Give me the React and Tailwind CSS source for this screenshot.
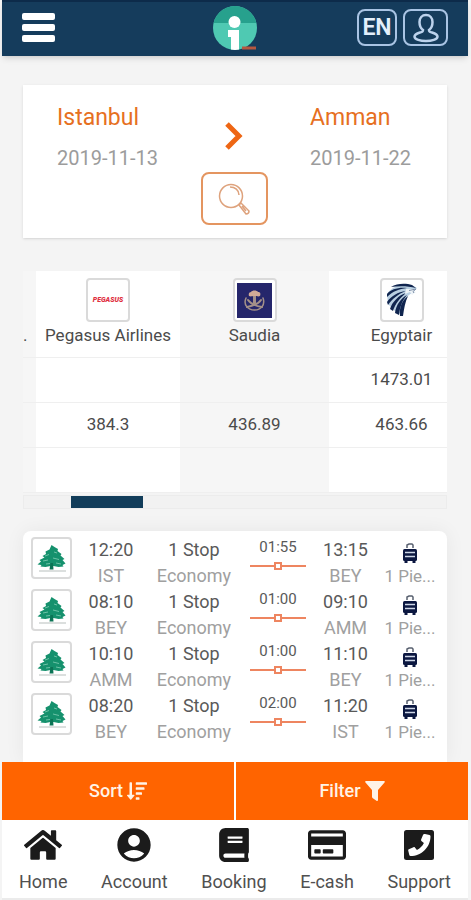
import { FaHome, FaBook, FaRegCreditCard, FaSortAmountDown } from 'react-icons/fa';
import { MdAccountCircle } from 'react-icons/md';

const fares = [
  { airline: 'Pegasus Airlines', logo: PegasusLogo, prices: ['', '384.3', ''] },
  { airline: 'Saudia', logo: SaudiaLogo, prices: ['', '436.89', ''] },
  { airline: 'Egyptair', logo: EgyptairLogo, prices: ['1473.01', '463.66', ''] },
];

const flights = [
  { depart: '12:20', from: 'IST', duration: '01:55', arrive: '13:15', to: 'BEY' },
  { depart: '08:10', from: 'BEY', duration: '01:00', arrive: '09:10', to: 'AMM' },
  { depart: '10:10', from: 'AMM', duration: '01:00', arrive: '11:10', to: 'BEY' },
  { depart: '08:20', from: 'BEY', duration: '02:00', arrive: '11:20', to: 'IST' },
];

const tabs = [
  { label: 'Home', icon: FaHome, size: 'h-[38px] w-[38px]' },
  { label: 'Account', icon: MdAccountCircle, size: 'h-10 w-10' },
  { label: 'Booking', icon: FaBook, size: 'h-[34px] w-[34px]' },
  { label: 'E-cash', icon: FaRegCreditCard, size: 'h-[38px] w-[38px]' },
  { label: 'Support', icon: SupportIcon, size: 'h-[30px] w-[30px]' },
];

function PegasusLogo() {
  return (
    <span className="flex h-full w-full items-center justify-center text-[7px] leading-none font-black italic text-[#e0303f]">
      PEGASUS
    </span>
  );
}

function SaudiaLogo() {
  return (
    <svg viewBox="0 0 35 35" className="h-[35px] w-[35px]" aria-hidden="true">
      <rect width="35" height="35" fill="#25266b" />
      <g fill="none" stroke="#a39089" strokeLinecap="round">
        <path d="M9 15c-3 7 2 12 8.500 12s11-5 8.500-12" strokeWidth="1.500" />
        <path d="M10 24c6-1 12-4 14-7M25 24c-6-1-12-4-14-7" strokeWidth="2" />
        <path d="M17.500 12v8" strokeWidth="3" />
      </g>
      <path d="M12 13c-1-3 1-4 2-4 1-2 6-2 7 0 2 0 3 1 2 4-2 1-3 0-5.500 0S14 14 12 13z" fill="#d2ab97" />
    </svg>
  );
}

function EgyptairLogo() {
  return (
    <svg viewBox="0 0 36 36" className="h-9 w-9" aria-hidden="true">
      <path d="M3 12C8 4 18 1 27 3l6 3-5 5c-7 3-9 12-9 22l-8-4-7-7z" fill="#b9d0e2" />
      <g fill="#10254f">
        <path d="M7 5c6-4 15-4 21-2l4 3c-8-2-17-2-25-1z" />
        <path d="M3 12c4-5 12-7 20-6-8 1-14 3-20 9z" />
        <path d="M3 20c4-6 11-10 19-11-8 3-14 8-18 14z" />
        <path d="M6 27c2-7 9-14 16-16-6 5-11 11-13 18z" />
        <path d="M11 31c1-8 6-15 12-18-5 6-7 12-8 20z" />
        <path d="M16 34c-1-8 2-16 8-20-3 6-4 13-5 20z" />
      </g>
      <path d="M22 7l11 0-3 2 2 1-4 3-2-3-5 2z" fill="#edf3f7" />
      <path d="M25 8.500l7-1.500-3 2.500 1 1.500" fill="none" stroke="#7b8ca6" />
    </svg>
  );
}

function CedarLogo() {
  return (
    <svg viewBox="0 0 36 36" className="h-9 w-9" aria-hidden="true">
      <path
        d="M17.500 5l3 2 3.500 2-.500 2 4 3-1 1.500 4 3.500-2 1 3 3.500-3 1.500 1 1.500-5 .500-5-1h-3l-5 1-5-.500 1-1.500-4-.500 3.500-3-1.500-1.500 5-2.500-2-1.500 3.500-2-.500-2.500 4-2z"
        fill="#15916d"
      />
      <path d="M11 16l4-1.500M20 12l3 1M9 21l5-1M19 18l6 1.500M12 24l4-.500M22 23l5 1" stroke="#6cc2a6" />
      <path d="M16.500 23h2.500l.500 6.500h-4z" fill="#0b7455" />
      <path d="M5 31h27" stroke="#b8bfbd" />
    </svg>
  );
}

function BrandLogo() {
  return (
    <svg viewBox="0 0 46 44" className="h-11 w-[46px]" role="img" aria-label="Home page">
      <clipPath id="disc">
        <circle cx="23" cy="22" r="22" />
      </clipPath>
      <g clipPath="url(#disc)">
        <rect width="46" height="44" fill="#4fc9b2" />
        <rect width="46" height="17" fill="#27a18d" />
        <path d="M16 24h11v20h-8V31h-3z" fill="#fff" />
      </g>
      <circle cx="22.500" cy="16" r="6" fill="#fff" />
      <path d="M30 42h14" stroke="#b5573f" strokeWidth="3" />
    </svg>
  );
}

function FilterIcon() {
  return (
    <svg viewBox="0 0 20 20" className="h-5 w-5" fill="currentColor" aria-hidden="true">
      <path d="M1 0h18c1 0 1 1 .500 1.500L13 9v10c0 .800-.800 1.200-1.500.700L7.500 17 7 16V9L.500 1.500C0 1 0 0 1 0z" />
    </svg>
  );
}

function SupportIcon({ className }) {
  return (
    <svg viewBox="0 0 30 30" className={className} aria-hidden="true">
      <rect width="30" height="30" rx="2.500" fill="currentColor" />
      <path
        d="M21 4l4.500 1c.700.200 1 .600 1 1.200C26.500 17 17.500 26 6.500 26c-.600 0-1-.300-1.200-1L4.200 20.500c-.200-.600.100-1 .600-1.300l4.700-2c.500-.200 1-.100 1.400.300l2 2.500c3-1.500 5.600-4 7-7l-2.500-2c-.400-.400-.500-.900-.300-1.400l2-4.900c.300-.600.800-.900 1.900-.700z"
        fill="#fff"
      />
    </svg>
  );
}

function Suitcase() {
  return (
    <svg viewBox="0 0 16 20" className="h-5 w-4" aria-hidden="true">
      <path d="M5 5V2l2-1h3l1 1v3" fill="none" stroke="#58606f" strokeWidth="1.500" />
      <rect x="1" y="6" width="14" height="12" rx="1.500" fill="#0b1740" />
      <path d="M3 9.500h10M3 13.500h10" stroke="#cfd8e8" strokeWidth="1.500" />
      <path d="M2.500 18h3v2h-3zM10.500 18h3v2h-3z" fill="#0b1740" />
    </svg>
  );
}

const Header = () => (
  <header className="flex h-14 items-center justify-between border-t-2 border-[#0d2b4a] bg-[#153c5c] px-5 pb-[3px] shadow-md">
    <div className="flex flex-1">
      <button className="space-y-1" aria-label="Menu">
        <span className="block h-[7px] w-[33px] rounded-xs bg-white" />
        <span className="block h-[7px] w-[33px] rounded-xs bg-white" />
        <span className="block h-[7px] w-[33px] rounded-xs bg-white" />
      </button>
    </div>
    <BrandLogo />
    <div className="flex flex-1 justify-end gap-1.5">
      <button className="h-[37px] w-10 rounded-lg border-2 border-[#a9c4e4] text-[23px] leading-8 font-semibold text-[#e3effb]">
        EN
      </button>
      <button
        className="flex h-[37px] w-[45px] items-center justify-center rounded-lg border-2 border-[#a9c4e4]"
        aria-label="Profile"
      >
        <svg viewBox="0 0 26 30" className="h-[30px] w-[26px]" fill="none" stroke="#bcd2ec" strokeWidth="2.500">
          <path d="M10 17c-3-2-3.500-5-3.500-8 0-4 2.500-7 6.500-7s6.500 3 6.500 7c0 3-.500 6-3.500 8 0 2 1 2 3 2.500 3 1 5.500 2 5.500 4 0 3-6 4.500-11.500 4.500S1.500 26.500 1.500 23.500c0-2 2.500-3 5.500-4 2-.500 3-.500 3-2.500z" />
        </svg>
      </button>
    </div>
  </header>
);

const SearchSummary = () => (
  <section className="flex h-[153px] justify-between bg-white pt-[17px] pr-9 pl-[34px] shadow-sm">
    <div>
      <p className="text-[23px] leading-8 text-[#e6701f]">Istanbul</p>
      <p className="mt-2 text-xl leading-8 text-[#9c9c9c]">2019-11-13</p>
    </div>
    <div className="flex flex-col items-center gap-5 pt-[18px]">
      <svg viewBox="0 0 20 32" className="h-8 w-5" fill="none" stroke="#ee6614" strokeWidth="5" aria-hidden="true">
        <path d="M3 4l12 12L3 28" />
      </svg>
      <button
        className="flex h-[53px] w-[67px] items-center justify-center rounded-lg border-2 border-[#e49560]"
        aria-label="Search"
      >
        <svg viewBox="0 0 32 32" className="h-8 w-8" fill="none" stroke="#dea27c" strokeWidth="1.500">
          <circle cx="13" cy="13" r="11.500" />
          <path d="M12 4c5 0 9 3 9 8M21 22l2-2 8 8c0 2-1 3-3 3l-7-9zM24 23l4 5" />
        </svg>
      </button>
    </div>
    <div>
      <p className="text-[23px] leading-8 text-[#e6701f]">Amman</p>
      <p className="mt-2 text-xl leading-8 text-[#9c9c9c]">2019-11-22</p>
    </div>
  </section>
);

const FareTable = () => (
  <section className="mt-[33px]">
    <div className="overflow-hidden bg-[#f6f6f6]">
      <table className="w-[451px] table-fixed text-center text-[17px] text-[#4b4b4b]">
        <colgroup>
          <col className="w-[13px]" />
          <col className="w-[144px]" />
          <col className="w-[149px]" />
          <col className="w-[145px]" />
        </colgroup>
        <thead>
          <tr className="h-[86px] border-b border-[#efefef]">
            <th className="pb-2 text-left align-bottom font-normal">.</th>
            {fares.map(({ airline, logo: Logo }) => (
              <th key={airline} className="pt-[7px] align-top font-normal even:bg-white">
                <span className="mx-auto flex h-11 w-11 items-center justify-center rounded-sm border-2 border-[#dadada] bg-white">
                  <Logo />
                </span>
                <span className="block leading-[26px] whitespace-nowrap">{airline}</span>
              </th>
            ))}
          </tr>
        </thead>
        <tbody>
          {[0, 1, 2].map((row) => (
            <tr key={row} className="h-[45px] border-b border-[#efefef]">
              <td />
              {fares.map((fare) => (
                <td key={fare.airline} className="even:bg-white">
                  {fare.prices[row]}
                </td>
              ))}
            </tr>
          ))}
        </tbody>
      </table>
    </div>
    {/* Scroll position */}
    <div className="mt-0.5 h-[14px] border border-[#ececec] bg-[#f2f2f2] pl-[47px]">
      <div className="h-full w-[72px] bg-[#123d5a]" />
    </div>
  </section>
);

const FlightRow = ({ flight }) => (
  <li className="grid h-[52px] grid-cols-[41px_78px_88px_80px_55px_1fr] text-center text-lg leading-[26px] text-[#595959]">
    <span className="flex h-[42px] w-[41px] items-center justify-center rounded-sm border-2 border-[#dadada]">
      <CedarLogo />
    </span>
    <div>
      <p>{flight.depart}</p>
      <p className="text-[#a0a0a0]">{flight.from}</p>
    </div>
    <div>
      <p>1 Stop</p>
      <p className="text-[#a0a0a0]">Economy</p>
    </div>
    <div>
      <p className="text-[15px] leading-5">{flight.duration}</p>
      <svg viewBox="0 0 56 10" className="mx-auto mt-1 h-2.5 w-14" fill="none" stroke="#ee8560" strokeWidth="2" aria-hidden="true">
        <path d="M0 5h24M32 5h24" />
        <rect x="25" y="2" width="6" height="6" />
      </svg>
    </div>
    <div>
      <p>{flight.arrive}</p>
      <p className="text-[#a0a0a0]">{flight.to}</p>
    </div>
    <div className="flex flex-col items-center">
      <span className="flex h-[26px] items-end">
        <Suitcase />
      </span>
      <p className="text-[17px] text-[#a0a0a0]">1 Pie...</p>
    </div>
  </li>
);

const App = () => {
  return (
    <div className="flex min-h-screen flex-col bg-[#f4f4f4] pr-[3px] pl-0.5 font-[Roboto,sans-serif]">
      <Header />

      <main className="flex flex-1 flex-col px-[21px] pt-[29px]">
        <SearchSummary />
        <FareTable />
        <ul className="mt-[22px] flex-1 rounded-t-lg bg-white pt-1.5 pb-2 pl-2 shadow-[0_0_20px_rgba(0,0,0,0.06)]">
          {flights.map((flight) => (
            <FlightRow key={flight.depart} flight={flight} />
          ))}
        </ul>
      </main>

      <footer className="relative bg-white">
        <div className="grid h-[58px] grid-cols-2 gap-0.5 text-lg font-medium text-[#fff3e6]">
          <button className="flex items-center justify-center gap-1 bg-[#ff6400]">
            Sort
            <FaSortAmountDown className="h-5 w-5" />
          </button>
          <button className="flex items-center justify-center gap-1 bg-[#ff6400]">
            Filter
            <FilterIcon />
          </button>
        </div>
        {/* Bottom navigation */}
        <nav className="flex h-20 justify-between border-b-2 border-[#ebebeb] px-[17px] pt-1.5">
          {tabs.map(({ label, icon: Icon, size }) => (
            <a key={label} href="#" className="flex flex-col items-center text-lg leading-7 text-[#505050]">
              <span className="mb-1 flex h-[38px] items-center text-[#1b1b1b]">
                <Icon className={size} />
              </span>
              {label}
            </a>
          ))}
        </nav>
      </footer>
    </div>
  );
};

export default App;
